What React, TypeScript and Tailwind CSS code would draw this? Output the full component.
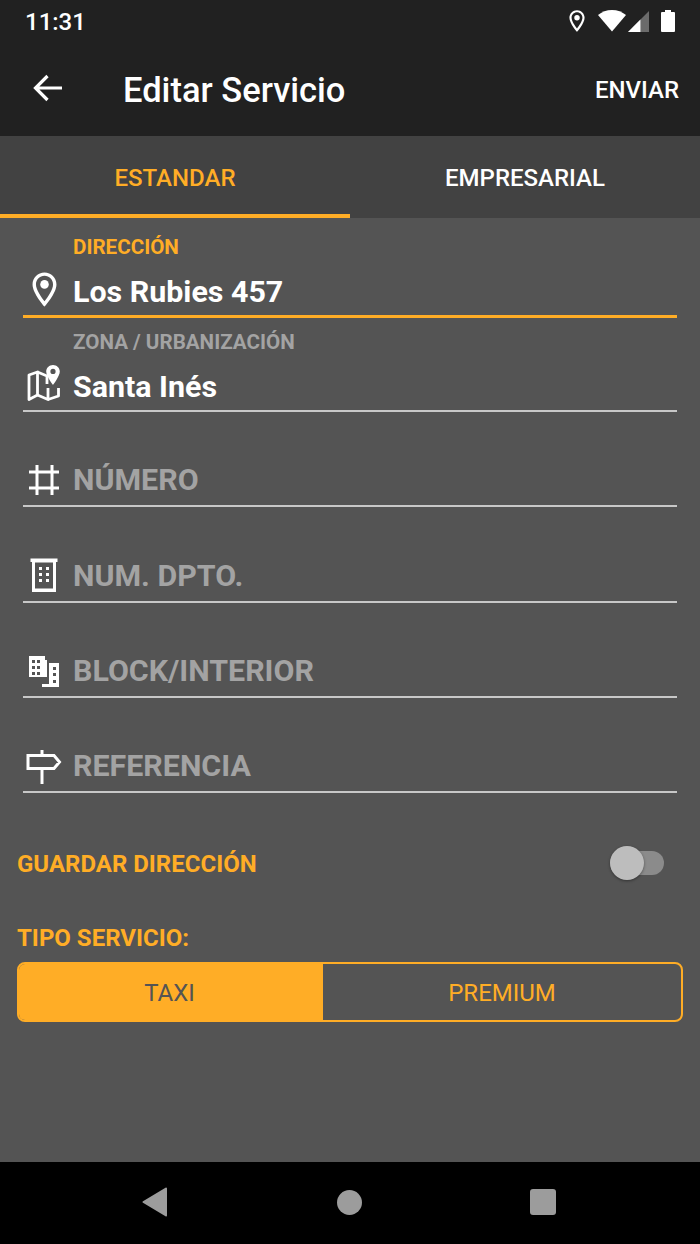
import React from "react";

const PinOutline = ({ className }: { className?: string }) => (
  <svg viewBox="0 0 24 24" className={className} fill="currentColor">
    <path d="M12 2C8.130 2 5 5.130 5 9c0 5.250 7 13 7 13s7-7.750 7-13c0-3.870-3.130-7-7-7zM7 9c0-2.760 2.240-5 5-5s5 2.240 5 5c0 2.880-2.880 7.190-5 9.880C9.920 16.210 7 11.850 7 9z" />
    <circle cx="12" cy="9" r="2.500" />
  </svg>
);

const MapIcon = () => (
  <svg viewBox="0 0 34 38" className="w-[34px] h-[38px] text-white mb-[7px]" fill="none" stroke="currentColor" strokeWidth="2.800" strokeLinejoin="round">
    <path d="M2 11 L10.500 8 L10.500 31 L2 35.500 Z" />
    <path d="M10.500 8 L20 12 L20 20 M10.500 31 L21 35.500 L21 24" />
    <path d="M21 35.500 L31.500 32 L31.500 24" />
    <path fill="currentColor" stroke="none" fillRule="evenodd" d="M26 1c-3.700 0-6.800 2.900-6.800 6.500 0 4.600 6.800 13.500 6.800 13.500s6.800-8.900 6.800-13.500C32.800 3.900 29.700 1 26 1zM26 4.800a2.600 2.600 0 1 1 0 5.200a2.600 2.600 0 0 1 0-5.200z" />
  </svg>
);

const HashIcon = () => (
  <svg viewBox="0 0 32 32" className="w-[32px] h-[32px] text-white mb-[2px]" fill="none" stroke="currentColor" strokeWidth="3">
    <path d="M9 1v30M24 1v30M1 8h30M1 24h30" />
  </svg>
);

const ApartmentIcon = () => (
  <svg viewBox="0 0 28 34" className="w-[28px] h-[34px] text-white mb-[4px]" fill="currentColor">
    <path fillRule="evenodd" d="M0.500 0.500h27v3.500h-1.500v30H2V4H0.500zM5 4.500v26h18v-26z" />
    <path d="M9 9h3v3H9zM16 9h3v3h-3zM9 15h3v3H9zM16 15h3v3h-3zM9 21h3v3H9zM16 21h3v3h-3z" />
  </svg>
);

const BuildingsIcon = () => (
  <svg viewBox="0 0 32 32" className="w-[32px] h-[32px] text-white mb-[1px]" fill="currentColor">
    <path fillRule="evenodd" d="M1 1h16v4h2v17H1zM4 5v3h3V5zM9 5v3h3V5zM4 11v3h3v-3zM9 11v3h3v-3zM4 17v3h3v-3zM9 17v3h3v-3z" />
    <path fillRule="evenodd" d="M21 8h10v24H14v-3h7zM25 12v3h3v-3zM25 18v3h3v-3zM25 25v3h3v-3z" />
  </svg>
);

const SignIcon = () => (
  <svg viewBox="0 0 36 36" className="w-[36px] h-[36px] text-white" fill="none" stroke="currentColor" strokeWidth="3">
    <path d="M16 1v34" />
    <path d="M2 6.500h26L33.500 13 28 19.500H2z" fill="#545454" />
  </svg>
);

function Field({ icon, label, value, placeholder, active }: { icon: React.ReactNode; label?: string; value?: string; placeholder?: string; active?: boolean }) {
  return (
    <div className={`relative flex flex-col justify-end ${active ? "h-[96px] -mb-[1px] border-b-[3px] border-[#ffad26]" : "h-[95.200px] border-b-[2px] border-[#c8c8c8]"}`}>
      {label && (
        <div className={`absolute left-[50px] bottom-[57px] text-[20.600px] leading-[22px] font-bold whitespace-nowrap ${active ? "text-[#ffad26]" : "text-[#a3a3a3]"}`}>
          {label}
        </div>
      )}
      <div className="flex items-center h-[48px]">
        <div className="w-[42px] h-[48px] flex items-center justify-center shrink-0">{icon}</div>
        <div className={`ml-[8px] text-[30.400px] leading-[36px] font-bold whitespace-nowrap ${value ? "text-white pt-[2px]" : "text-[#a3a3a3] pb-[2px]"}`}>
          {value ?? placeholder}
        </div>
      </div>
    </div>
  );
}

export default function App() {
  return (
    <div className="w-[700px] h-[1244px] flex flex-col overflow-hidden bg-[#545454] font-['Roboto',sans-serif]">
      <div className="h-[136px] bg-[#212121] shrink-0 flex flex-col">
        <div className="h-[42px] flex items-center justify-between pl-[25px] pr-[25px]">
          <span className="text-white text-[24px] leading-[28px] font-medium pt-[1px]">11:31</span>
          <div className="flex items-center text-white">
            <PinOutline className="w-[26px] h-[26px] ml-[1px] mr-[8px]" />
            <svg viewBox="0 0 28 22" className="w-[28px] h-[22px]"><path d="M0 5C3.800 1.900 8.600 0 14 0s10.200 1.900 14 5L14 21.500z" fill="white" /></svg>
            <svg viewBox="0 0 22 22" className="w-[21px] h-[21px] ml-[2px]"><path d="M22 0v22H0z" fill="#6b6b6b" /><path d="M13 9v13H0z" fill="white" /></svg>
            <svg viewBox="0 0 14 22" className="w-[14px] h-[22px] ml-[12px]"><path d="M4 0h6v2h3a1 1 0 0 1 1 1v18a1 1 0 0 1-1 1H1a1 1 0 0 1-1-1V3a1 1 0 0 1 1-1h3z" fill="white" /></svg>
          </div>
        </div>
        <div className="flex-1 flex items-center pl-[33px] pr-[21px] pb-[2px]">
          <svg viewBox="0 0 29 28" className="w-[29px] h-[28px]" fill="none" stroke="white" strokeWidth="3.200">
            <path d="M29 14H3M14.500 2 2.500 14l12 12" />
          </svg>
          <span className="ml-[61px] text-white text-[34.500px] leading-[40px] font-medium pt-[4px]">Editar Servicio</span>
          <span className="ml-auto text-white text-[24px] leading-[28px] font-medium pt-[4px]">ENVIAR</span>
        </div>
      </div>

      <div className="h-[82px] bg-[#424242] shrink-0 flex">
        <div className="w-[350px] flex items-center justify-center border-b-[4px] border-[#ffad26] pt-[6px] text-[#ffad26] text-[24px] font-medium">ESTANDAR</div>
        <div className="w-[350px] flex items-center justify-center pt-[2px] text-white text-[24px] font-medium">EMPRESARIAL</div>
      </div>

      <div className="flex-1 flex flex-col">
        <div className="mx-[23px] mt-[4px]">
          <Field active label="DIRECCIÓN" value="Los Rubies 457" icon={<PinOutline className="w-[41px] h-[41px] text-white mb-[4px]" />} />
          <Field label="ZONA / URBANIZACIÓN" value="Santa Inés" icon={<MapIcon />} />
          <Field placeholder="NÚMERO" icon={<HashIcon />} />
          <Field placeholder="NUM. DPTO." icon={<ApartmentIcon />} />
          <Field placeholder="BLOCK/INTERIOR" icon={<BuildingsIcon />} />
          <Field placeholder="REFERENCIA" icon={<SignIcon />} />
        </div>

        <div className="mt-[57px] pl-[17px] pr-[36px] flex items-center justify-between">
          <span className="text-[#ffad26] text-[24px] leading-[28px] font-bold">GUARDAR DIRECCIÓN</span>
          <div className="relative w-[54px] h-[24px] mb-[2px] rounded-full bg-[#8b8b8b]">
            <div className="absolute left-0 -top-[5px] w-[34px] h-[34px] rounded-full bg-[#bdbdbd] shadow-[0_1px_3px_rgba(0,0,0,0.4)]" />
          </div>
        </div>

        <div className="mt-[46px] pl-[17px] text-[#ffad26] text-[24px] leading-[28px] font-bold">TIPO SERVICIO:</div>

        <div className="mt-[10px] mx-[17px] h-[60px] flex rounded-[8px] border-[2px] border-[#ffad26] overflow-hidden">
          <div className="w-[304px] pr-[3px] pt-[2px] bg-[#ffad26] flex items-center justify-center text-[#545454] text-[24px]">TAXI</div>
          <div className="flex-1 flex items-center justify-center pt-[2px] text-[#ffad26] text-[24px]">PREMIUM</div>
        </div>
      </div>

      <div className="h-[82px] bg-black shrink-0 flex items-center pb-[2px]">
        <div className="w-[700px] flex items-center justify-between pl-[142px] pr-[144px]">
          <svg viewBox="0 0 26 30" className="w-[26px] h-[30px]"><path d="M24 1.500 1.500 15 24 28.500z" fill="#9c9c9c" stroke="#9c9c9c" strokeWidth="2" strokeLinejoin="round" /></svg>
          <div className="w-[25px] h-[25px] rounded-full bg-[#9c9c9c]" />
          <div className="w-[26px] h-[26px] rounded-[3px] bg-[#9c9c9c]" />
        </div>
      </div>
    </div>
  );
}
